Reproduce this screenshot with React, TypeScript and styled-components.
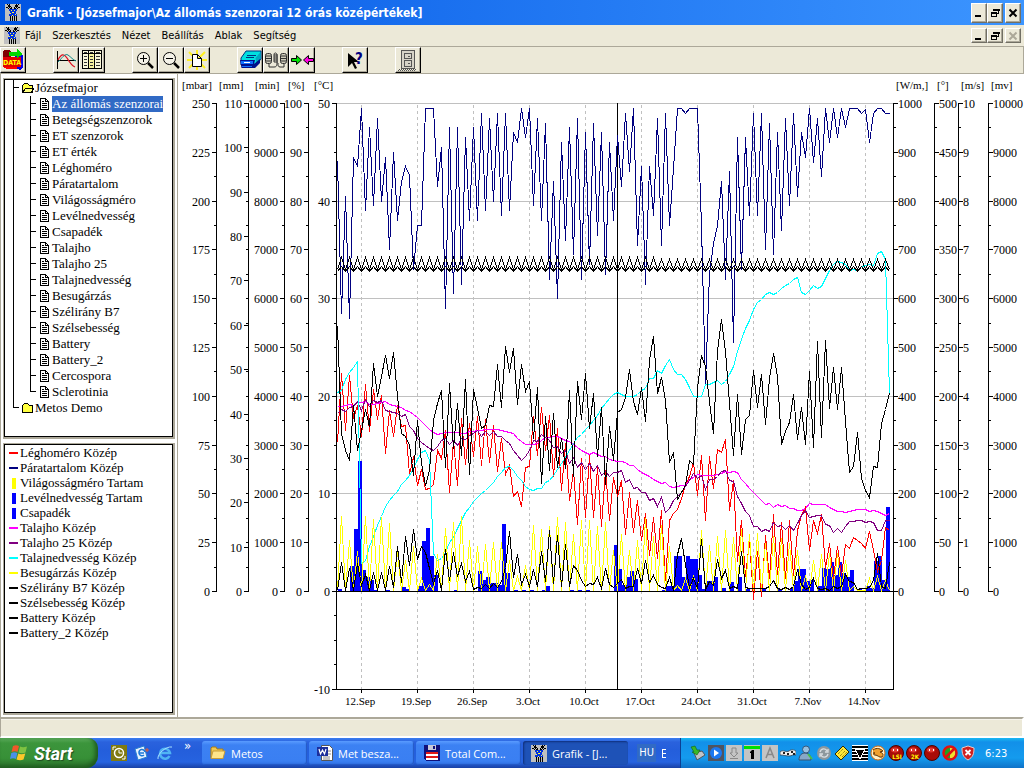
import React from 'react';
import styled, { createGlobalStyle, css } from 'styled-components';

const UI = '"DejaVu Sans Condensed", "DejaVu Sans", "Liberation Sans", sans-serif';
const HUMANIST = '"Open Sans", "Noto Sans", sans-serif';
const SERIF = '"Liberation Serif", serif';

const GlobalStyle = createGlobalStyle`
  *, *::before, *::after { box-sizing: border-box; }
  html, body, #root { margin: 0; height: 100%; }
  body { background: #ece9d8; font: 11px ${UI}; color: #000; overflow: hidden; }
  button { font: inherit; color: inherit; margin: 0; padding: 0; border: 0; background: none; }
  ul { list-style: none; margin: 0; padding: 0; }
  svg { display: block; flex: none; }
`;

/* ---------- window frame ---------- */

const Screen = styled.div`
  display: flex;
  flex-direction: column;
  height: 100vh;
`;

const TitleBar = styled.header`
  display: flex;
  align-items: center;
  height: 25px;
  padding: 0 3px 0 5px;
  gap: 6px;
  background: linear-gradient(90deg, #0054e3, #3c95ff);
`;

const Title = styled.h1`
  flex: 1;
  margin: 0;
  color: #fff;
  font: bold 12px ${UI};
  white-space: nowrap;
`;

const WindowControls = styled.div`
  display: flex;
  margin-left: auto;
`;

const WindowButton = styled.button<{ $small?: boolean; $apart?: boolean }>`
  display: grid;
  place-items: center;
  width: 16px;
  height: ${p => (p.$small ? 15 : 20)}px;
  margin-left: ${p => (p.$apart ? 2 : 0)}px;
  background: #ece9d8;
  border: 1px solid;
  border-color: #fff #716f64 #716f64 #fff;
  box-shadow: inset -1px -1px #aca899;
`;

const MenuBar = styled.nav`
  display: flex;
  align-items: center;
  height: 21px;
  padding: 0 3px 0 4px;
`;

const MenuItems = styled.div`
  display: flex;
  gap: 11px;
  margin-left: 5px;
`;

const MenuItem = styled.button`
  line-height: 16px;
  white-space: nowrap;
`;

const ToolBar = styled.div`
  display: flex;
  gap: 27px;
  height: 28px;
  border-top: 1px solid #aca899;
  border-bottom: 1px solid #aca899;
  border-right: 1px solid #aca899;
`;

const ToolGroup = styled.div`
  display: flex;
`;

const ToolButton = styled.button`
  display: grid;
  place-items: center;
  width: 26px;
  height: 26px;
  background: #ece9d8;
  border: 1px solid;
  border-color: #fff #000 #000 #fff;
  box-shadow: inset -1px -1px #aca899;
`;

const Main = styled.main`
  display: flex;
  flex: 1;
  min-height: 0;
  background: #fff;
`;

const StatusBar = styled.footer`
  height: 21px;
  border: solid;
  border-width: 2px 2px 2px 1px;
  border-color: #aca899 #fff #fff #aca899;
  box-shadow: inset 0 1px #f6f4ec;
  background: #ece9d8;
`;

/* ---------- side panels ---------- */

const Sidebar = styled.aside`
  display: flex;
  flex-direction: column;
  gap: 4px;
  width: 178px;
  padding: 4px 2px 2px 3px;
  border-right: 1px solid #aca899;
  box-shadow: inset 1px 0 #aca899;
  font: 13px/16px ${SERIF};
`;

const Panel = styled.section<{ $grow: number }>`
  flex: ${p => p.$grow} 1 0;
  min-height: 0;
  border: solid #aca899;
  border-width: 1px 2px 2px 1px;
  display: flex;
`;

const PanelBody = styled.div`
  flex: 1;
  border: 1px solid #000;
  overflow: hidden;
`;

const TreeRow = styled.li<{ $depth: number }>`
  display: flex;
  align-items: center;
  height: 16px;
  padding-left: 8px;
  gap: ${p => (p.$depth === 0 ? 3 : 4)}px;
`;

const Guides = styled.span`
  display: flex;
  height: 16px;
`;

const Guide = styled.span<{ $wide?: boolean }>`
  width: ${p => (p.$wide ? 17 : 5)}px;
  border-left: 1px solid #000;
`;

const Branch = styled.span<{ $last?: boolean }>`
  display: grid;
  grid-template-rows: 8px 8px;
  width: 6px;
  &::before { content: ''; border-left: 1px solid #000; border-bottom: 1px solid #000; }
  &::after { content: ''; border-left: ${p => (p.$last ? 0 : 1)}px solid #000; }
`;

const TreeButton = styled.button<{ $selected?: boolean }>`
  height: 16px;
  line-height: 16px;
  margin-left: -2px;
  white-space: nowrap;
  ${p => p.$selected && css`background: #316ac5; color: #fff;`}
`;

const LegendList = styled.ul`
  padding: 1px 0 0 4px;
`;

const LegendRow = styled.li`
  display: flex;
  align-items: center;
  gap: 2px;
  height: 15px;
  white-space: nowrap;
`;

const Swatch = styled.span<{ $color: string; $bar?: boolean }>`
  display: grid;
  place-items: center;
  width: 9px;
  &::before {
    content: '';
    width: ${p => (p.$bar ? 4 : 9)}px;
    height: ${p => (p.$bar ? 11 : 2)}px;
    background: ${p => p.$color};
  }
`;

/* ---------- task bar ---------- */

const TaskBar = styled.footer`
  display: flex;
  height: 30px;
  background: linear-gradient(#3a7df0 0, #2a62dd 4px, #245edb 12px, #2663e0 24px, #1941a5 30px);
  color: #fff;
`;

const StartButton = styled.button`
  display: flex;
  align-items: center;
  gap: 5px;
  width: 98px;
  padding-left: 10px;
  border-radius: 0 10px 12px 0;
  background: linear-gradient(#5dac5d 0, #3c953c 5px, #379037 20px, #2a6f2a 30px);
  box-shadow: inset -3px -2px 4px #1e5a1e;
  font: italic bold 18px Roboto, "Liberation Sans", sans-serif;
  text-shadow: 1px 1px 1px #1f4a1f;
`;

const QuickLaunch = styled.div`
  display: flex;
  align-items: center;
  gap: 7px;
  width: 104px;
  padding-left: 13px;
`;

const More = styled.button`
  align-self: flex-start;
  margin-left: 4px;
  font-size: 13px;
`;

const Tasks = styled.div`
  display: flex;
  align-items: center;
  gap: 2px;
`;

const TaskButton = styled.button<{ $active?: boolean }>`
  display: flex;
  align-items: center;
  gap: 5px;
  width: 105px;
  height: 24px;
  padding: 0 8px;
  border-radius: 3px;
  font-family: ${HUMANIST};
  white-space: nowrap;
  background: ${p => (p.$active ? '#1e52b7' : 'linear-gradient(#5a9bff 0, #3c81f3 4px, #3a7ff2 20px, #2f6fe0 24px)')};
  box-shadow: ${p => (p.$active ? 'inset 1px 1px 2px #0f2f7a' : 'inset -1px -1px 1px #2458c4')};
`;

const Language = styled.div`
  display: flex;
  align-items: center;
  gap: 6px;
  margin-left: auto;
  padding-right: 14px;
`;

const LanguageCode = styled.button`
  padding: 0 2px;
  line-height: 18px;
  background: #316ac5;
`;

const Tray = styled.div`
  display: flex;
  align-items: center;
  gap: 2px;
  width: 344px;
  padding-left: 9px;
  border-left: 1px solid #0c3f93;
  background: linear-gradient(#19b9f3 0, #1290e9 4px, #149bee 20px, #0f72c8 30px);
`;

const Clock = styled.time`
  margin-left: 7px;
`;

/* ---------- icons ---------- */

const Station = () => (
  <svg width="16" height="17" viewBox="0 0 16 17" shapeRendering="crispEdges">
    <rect width="16" height="17" fill="#c0c0c0" />
    <path d="M2 0l4 5M14 0l-4 5M1 3l5 3M15 3l-5 3M5 11v6M7 11v6M9 11v6M11 11v6M4 0l3 5M12 0l-3 5" stroke="#000" fill="none" />
    <path d="M4 5h8v2h-1v3h1v2H4v-2h1V7H4z" fill="#0030e0" />
    <path d="M6 6h1v1H6zM9 6h1v1H9zM7 8h2v1H7zM5 9h1v1H5zM10 10h1v1h-1zM7 11h1v1H7z" fill="#ffff40" />
  </svg>
);

const Minimise = () => (
  <svg width="10" height="10"><rect x="1" y="7" width="6" height="2" fill="#000" /></svg>
);
const Restore = () => (
  <svg width="10" height="10" shapeRendering="crispEdges" fill="none" stroke="#000">
    <path d="M3.500 3V1.500h5v4H7M3 1h6v1H3M1.500 4.500h5v4h-5zM1 5h6" />
  </svg>
);
const Close = ({ color = '#000' }: { color?: string }) => (
  <svg width="10" height="10"><path d="M1.500 1.500l7 7M8.500 1.500l-7 7" stroke={color} strokeWidth="2" /></svg>
);

const DataIcon = () => (
  <svg width="22" height="22" viewBox="0 0 22 22" shapeRendering="crispEdges">
    <path d="M13 6h8v13l-3 2-5-3z" fill="#0000e8" />
    <rect x="1" y="8" width="18" height="10" fill="#e00000" />
    <path d="M1 18h14v2H5z" fill="#f00" />
    <path d="M2 1h5l2 2v5H1V3z" fill="#800000" />
    <path d="M7 3h8V0l6 5-6 4V7H7z" fill="#00d800" />
    <text x="10" y="16" textAnchor="middle" fill="#ff0" fontFamily={UI} fontWeight="bold" fontSize="7">DATA</text>
  </svg>
);
const CurveIcon = () => (
  <svg width="22" height="20" viewBox="0 0 22 20" fill="none">
    <path d="M2.500 1v18M2 10.500h19" stroke="#000" shapeRendering="crispEdges" />
    <path d="M3 10c3-6 6-7 9-2s5 8 8 9" stroke="#e01020" strokeWidth="1.300" />
    <path d="M3 12c4-4 7-9 10-7s5 5 8 6" stroke="#108888" />
  </svg>
);
const TableIcon = () => (
  <svg width="20" height="20" viewBox="0 0 20 20" shapeRendering="crispEdges">
    <path d="M.5.500h19v18H.5z" fill="#f8f6d8" stroke="#000" />
    <path d="M.5 3.500h19M6.500 1v18M12.500 1v18" stroke="#000" />
    <path d="M7 4h5v14H7z" fill="#f8f4a0" />
    <path d="M2 6.500h3M2 9.500h3M2 12.500h3M2 15.500h3M8 6.500h3M8 9.500h3M8 12.500h3M8 15.500h3M14 6.500h4M14 9.500h4M14 12.500h4M14 15.500h4M2 2h3M8 2h3M14 2h4" stroke="#333" />
  </svg>
);
const Magnifier = ({ plus }: { plus?: boolean }) => (
  <svg width="20" height="20" viewBox="0 0 20 20" fill="none" stroke="#000">
    <circle cx="8.500" cy="8.500" r="6" fill="#f4f2e8" />
    <path d={plus ? 'M5 8.500h7M8.500 5v7' : 'M5 8.500h7'} shapeRendering="crispEdges" />
    <path d="M13 13l5 5" strokeWidth="2.500" />
  </svg>
);
const NewPage = () => (
  <svg width="20" height="20" viewBox="0 0 20 20">
    <path d="M2 2l16 16M18 2L2 18M10 0v20M0 10h20" stroke="#ffef20" strokeWidth="2" />
    <path d="M5.500 4.500h5l4 4v8h-9zM10.500 4.500v4h4" fill="#fff" stroke="#000" />
  </svg>
);
const DrawerIcon = () => (
  <svg width="23" height="20" viewBox="0 0 23 20">
    <path d="M7 1h15v8l-5 6H2V8z" fill="#00e0e0" stroke="#003080" />
    <path d="M16.500 8L21.500 2v7l-4 5z" fill="#00a8c0" />
    <path d="M8 5.500h9M7 7.500h8" stroke="#003080" />
    <path d="M1 10h15l-1 4 6-5v4l-5 5H2.500z" fill="#00108c" />
    <path d="M2 11h12v3H2zM3 16h10v1H3z" fill="#1070ff" />
    <path d="M5 12.500h6" stroke="#fff" />
  </svg>
);
const PlugIcon = () => (
  <svg width="24" height="20" viewBox="0 0 24 20" fill="none" stroke="#303030">
    <rect x="1.500" y="3.500" width="6" height="10" rx="2" fill="#d0cdbc" />
    <rect x="16.500" y="3.500" width="6" height="10" rx="2" fill="#d0cdbc" />
    <path d="M2 6h5M2 8.500h5M2 11h5M17 6h5M17 8.500h5M17 11h5M5 14v3h5c3 0 3-2 3-5V6c0-4-3-4-3-1v7M20 14v3h-4c-2 0-2-2-2-4" />
    <path d="M11 4v9M13 4v9" />
  </svg>
);
const ArrowsIcon = () => (
  <svg width="23" height="12" viewBox="0 0 23 12" stroke="#000">
    <path d="M.5 4.500h5v-3l5 4.500-5 4.500v-3h-5z" fill="#00e000" />
    <path d="M22.500 4.500h-5v-3L12.500 6l5 4.500v-3h5z" fill="#ff00e0" />
  </svg>
);
const HelpIcon = () => (
  <svg width="20" height="20" viewBox="0 0 20 20">
    <path d="M3 3v14l4-4 3 6 2-1-3-6h5z" fill="#000" />
    <text x="10" y="14" fill="#000080" fontFamily={UI} fontWeight="bold" fontSize="15">?</text>
  </svg>
);
const CabinetIcon = () => (
  <svg width="20" height="21" viewBox="0 0 20 21" shapeRendering="crispEdges" fill="#d6d3c8" stroke="#555">
    <path d="M3.500.5h13v18h-13zM6.500 3.500h7v5h-7zM6.500 10.500h7v6h-7zM10 6.500h2M10 13.500h2" />
    <path d="M1 19.500h18M0 20.500h18" strokeDasharray="1 1" />
  </svg>
);

const DocIcon = () => (
  <svg width="10" height="12" viewBox="0 0 10 12" shapeRendering="crispEdges">
    <path d="M.5.5h5l3 3v8h-8zM5.500.5v3h3" fill="#fff" stroke="#000" />
    <path d="M2 3.500h2M2 5.500h5M2 7.500h5M2 9.500h5" stroke="#000" />
  </svg>
);
const FolderIcon = ({ open }: { open?: boolean }) => (
  <svg width="12" height="11" viewBox="0 0 12 11" shapeRendering="crispEdges">
    <path d="M.5 9.500v-7l2-2h3l2 2h3v7z" fill="#ffff40" stroke="#000" />
    {open && <path d="M.5 9.500l3-4h8l-2 4z" fill="#ffff80" stroke="#000" />}
  </svg>
);

const Flag = () => (
  <svg width="19" height="18" viewBox="0 0 19 18">
    <path d="M3 2c2-1 4-1 6 0L7.500 8C6 7 4 7 1.500 8z" fill="#f0582a" />
    <path d="M10 2.500c2 1 4 1 7 0L15.500 8.500c-2 1-5 1-7 0z" fill="#7fc242" />
    <path d="M1.300 9c2-1 4-1 6 0L6 15c-2-1-4-1-6 0z" fill="#4a90e8" />
    <path d="M8.300 9.500c2 1 4 1 7 0L13.500 15.500c-2 1-5 1-7 0z" fill="#fdc82a" />
  </svg>
);
const OutlookIcon = () => (
  <svg width="16" height="16" viewBox="0 0 16 16">
    <rect width="16" height="16" fill="#807a10" />
    <circle cx="8" cy="8" r="4.500" fill="none" stroke="#fff" strokeWidth="1.500" />
    <path d="M8 5v3h3M2 2h3M2 2v3M14 14h-3M14 14v-3" stroke="#fff" fill="none" />
  </svg>
);
const MailIcon = () => (
  <svg width="16" height="16" viewBox="0 0 16 16">
    <path d="M1 4l9-3 3 11-9 3z" fill="#e8f2ff" stroke="#2a80d0" />
    <path d="M10 8H5a3 3 0 0 1 6-1M5 8a3 3 0 0 0 5 2" stroke="#1a78d8" strokeWidth="1.500" fill="none" />
    <path d="M11 5h4M13 3v4" stroke="#e86030" />
  </svg>
);
const ExplorerIcon = () => (
  <svg width="16" height="16" viewBox="0 0 16 16" fill="none">
    <path d="M12.500 11a5 5 0 1 1 .5-3H4" stroke="#4fb4f4" strokeWidth="2.500" />
    <path d="M1 14C0 9 9 1 15 2" stroke="#a8e0ff" />
  </svg>
);
const FolderTask = () => (
  <svg width="16" height="14" viewBox="0 0 16 14">
    <path d="M1 12V2l1-1h4l1 2h6v9z" fill="#f0c850" stroke="#a87c18" />
    <path d="M1 12.500L3 5h12l-2 7.500z" fill="#ffe58a" stroke="#c89c38" />
  </svg>
);
const WordTask = () => (
  <svg width="16" height="16" viewBox="0 0 16 16">
    <path d="M4.500.5h8l3 3v12h-11z" fill="#fff" stroke="#555" />
    <path d="M6 12h7M6 14h7M11 6h3M11 9h3" stroke="#888" />
    <rect x="0" y="2" width="11" height="9" fill="#1c2f9c" />
    <path d="M2 4l1.500 5L5.500 5l2 4L9 4" stroke="#fff" fill="none" strokeWidth="1.200" />
  </svg>
);
const FloppyTask = () => (
  <svg width="16" height="16" viewBox="0 0 16 16" shapeRendering="crispEdges">
    <path d="M0 0h16v16H2l-2-2z" fill="#10107a" />
    <path d="M4 0h8v5H4z" fill="#c8c8d8" /><path d="M9 1h2v3H9z" fill="#10107a" />
    <path d="M2 8h12v7H2z" fill="#fff" /><path d="M2 7h12v2H2zM2 11h12v2H2z" fill="#e01818" />
  </svg>
);

const Square = ({ children, fill = '#c4c4c4' }: { children?: React.ReactNode; fill?: string }) => (
  <svg width="16" height="16" viewBox="0 0 16 16"><rect width="16" height="16" fill={fill} />{children}</svg>
);
const RedBall = ({ label }: { label?: string }) => (
  <svg width="16" height="16" viewBox="0 0 16 16">
    <circle cx="8" cy="8" r="7.500" fill="#a80c08" stroke="#4c0400" />
    <ellipse cx="7" cy="5" rx="4" ry="2.500" fill="#e03830" />
    <path d="M5 4h1v2H5zM9 4h1v2H9z" fill="#fff" />
    {label && <text x="9" y="14" textAnchor="middle" fill="#ff0" fontFamily={UI} fontSize="6" fontWeight="bold">{label}</text>}
  </svg>
);
const TrayIcons = () => (
  <>
    <svg width="16" height="16" viewBox="0 0 16 16">
      <path d="M4 8l8-2 3 4-8 5z" fill="#c0c4c8" stroke="#505860" />
      <path d="M1 2l4-1 2 4h3l-3 5-5-3h2z" fill="#38b828" stroke="#106010" strokeWidth=".6" />
    </svg>
    <Square fill="#505460"><circle cx="8" cy="8" r="6" fill="#1c78f0" /><path d="M6 4.500v7l5-3.500z" fill="#fff" /></Square>
    <Square><path d="M6 3h4v5h2l-4 4-4-4h2zM4 13.500h8" fill="none" stroke="#888" /></Square>
    <Square><rect width="16" height="3" y="1" fill="#00e000" /><path d="M6 7l2-2h2v9H7V8H6z" fill="#000" /></Square>
    <Square><path d="M4 13L8 3l4 10M5.500 9.500h5" fill="none" stroke="#888" strokeWidth="1.500" /></Square>
    <svg width="16" height="16" viewBox="0 0 16 16">
      <path d="M0 7c3-3 6 1 9-1s5-1 7 0v4c-3-1-4 1-7 1s-5-1-9-1z" fill="#f0f0f0" stroke="#203040" strokeWidth=".7" />
      <path d="M3 7h2v2H3zM7 8h2v2H7zM11 6h2v2h-2zM13 8h2v2h-2z" fill="#202020" />
    </svg>
    <svg width="16" height="16" viewBox="0 0 16 16">
      <path d="M1 15c0-5 3-7 6-7s6 2 6 7z" fill="#88a8c8" stroke="#38506c" />
      <circle cx="8" cy="4.500" r="3.500" fill="#98c0e0" stroke="#38587c" />
      <path d="M10 9l4 5" stroke="#48c048" strokeWidth="2" />
    </svg>
    <svg width="16" height="16" viewBox="0 0 16 16">
      <circle cx="8" cy="8" r="7" fill="#8e989e" />
      <path d="M4 7c1-4 6-4 7-1M12 4v3H9M12 9c-1 4-6 4-7 1M4 12V9h3" stroke="#d8dce0" strokeWidth="1.300" fill="none" />
    </svg>
    <svg width="16" height="16" viewBox="0 0 16 16">
      <path d="M1 9l8-8 6 6-8 8z" fill="#ffe838" stroke="#302800" />
      <path d="M4 9l5-5M6 11l5-5M8 12l5-5" stroke="#706000" strokeDasharray="1 1" />
    </svg>
    <svg width="16" height="16" viewBox="0 0 16 16" shapeRendering="crispEdges">
      <rect width="16" height="16" fill="#fff" />
      <path d="M0 1.500h16M0 4.500h16M0 7.500h16M0 10.500h16M0 13.500h16" stroke="#000" strokeWidth="2" />
      <path d="M3 4h10l-5 10z" fill="#000" stroke="#fff" />
    </svg>
    <svg width="16" height="16" viewBox="0 0 16 16">
      <circle cx="8" cy="8" r="7" fill="#fff0c8" stroke="#d86808" />
      <path d="M3 5c4-3 8-1 10 1l-3 1c3 1 4 3 2 5-3 1-4-2-7-2-2 0-2-2 0-2L3 8" fill="#f0a030" stroke="#603000" />
    </svg>
    <RedBall label="LSI" />
    <RedBall label="2K" />
    <RedBall />
    <svg width="16" height="16" viewBox="0 0 16 16">
      <path d="M2 3h6v10H2z" fill="#20a020" /><path d="M8 3h5v10H8z" fill="#f0e030" />
      <circle cx="8" cy="8" r="6.500" fill="none" stroke="#e01010" strokeWidth="2.500" />
      <path d="M13 3L3 13" stroke="#e01010" strokeWidth="2.500" />
    </svg>
    <svg width="16" height="16" viewBox="0 0 16 16">
      <path d="M8 1l6 2c0 6-1 9-6 12C3 12 2 9 2 3z" fill="#d02020" stroke="#e8c8c8" />
      <path d="M5.500 5l5 5M10.500 5l-5 5" stroke="#fff" strokeWidth="1.800" />
    </svg>
  </>
);

/* ---------- chart ---------- */

// Readings come every 12 hours (4px); heights are in thirds of a pixel below a series' own top.
const STEP = 4;
const X0 = 337;
const UPPER = 90;
const LOWER = 330;
const ZERO = 591;

const humidity = [215,670,320,686,202,229,55,360,112,347,85,334,202,479,187,391,275,229,256,538,406,406,55,55,55,290,172,656,112,611,112,584,142,392,112,392,70,361,85,334,70,377,70,361,127,157,55,142,55,347,85,391,100,569,274,626,157,452,112,494,85,569,127,523,100,437,127,554,157,391,136,290,70,244,55,466,229,584,229,377,85,466,70,406,235,55,55,70,55,55,55,410,880,550,460,405,274,569,244,758,142,538,142,377,70,377,70,479,100,494,127,421,85,347,70,320,127,202,55,218,85,259,55,157,55,142,55,112,55,55,55,70,57,157,70,55,55,70,70];
const moisture = [188,180,148,126,112,94,700,690,650,618,585,558,530,512,496,484,463,450,435,415,388,366,360,390,670,690,685,668,637,622,595,570,548,532,515,503,490,480,468,458,440,428,412,408,420,438,452,470,479,482,476,475,458,450,435,418,400,382,360,340,322,312,298,285,270,255,235,220,204,194,188,192,199,200,200,193,182,174,145,145,122,131,105,88,117,133,134,148,172,198,200,198,163,163,157,152,162,155,133,108,65,28,-5,-28,-62,-82,-93,-107,-113,-107,-114,-125,-134,-141,-152,-158,-114,-107,-118,-133,-125,-132,-155,-180,-197,-205,-202,-198,-180,-182,-180,-192,-195,-197,-195,-230,-236,-212,190];
const airTemp = [338,130,302,135,265,225,320,163,305,178,268,196,370,242,318,226,290,286,433,378,467,418,478,475,463,362,385,302,486,330,467,265,402,280,378,260,405,268,396,285,423,325,433,405,500,484,529,413,410,260,375,232,362,257,440,295,480,340,511,420,583,385,563,376,562,412,590,420,572,443,500,451,614,488,607,510,631,550,677,562,684,540,750,572,550,537,505,466,438,398,495,376,571,378,475,358,367,328,540,450,695,572,738,630,808,665,800,615,745,552,733,577,745,570,735,600,555,532,660,572,610,553,715,640,745,650,735,643,655,622,630,640,656,603,660,725,690,592,600];
const soil = [228,229,225,222,225,217,216,214,222,222,220,216,214,224,225,228,233,240,243,252,261,274,286,297,307,312,309,307,307,307,308,311,310,305,304,301,300,299,298,299,298,300,303,306,309,325,334,342,343,343,340,331,323,321,320,320,325,332,335,343,352,362,368,372,367,374,378,380,388,392,394,394,398,406,406,417,428,433,438,448,455,460,457,470,471,470,467,466,448,443,434,437,435,437,436,433,430,425,426,425,428,449,460,475,488,500,510,522,521,532,523,530,527,534,534,540,541,535,520,523,523,523,523,532,537,543,545,548,544,542,538,538,538,543,540,545,551,555,550];
const soil25 = [250,238,245,232,228,215,242,208,230,212,218,210,242,245,247,250,258,252,290,300,325,337,347,355,362,350,330,325,343,332,345,325,328,317,311,302,318,304,317,304,318,320,330,340,360,377,390,380,360,330,335,313,322,330,352,348,370,362,400,382,412,396,418,400,425,405,435,425,440,428,426,420,457,447,475,472,486,488,512,505,530,503,547,535,510,500,487,470,450,430,445,435,478,448,448,440,425,420,450,455,500,520,545,557,588,590,605,597,603,577,590,585,597,585,600,580,555,540,563,560,555,555,582,587,607,595,607,590,575,575,570,570,576,575,578,602,600,572,570];
const windDirection = [-10,310,360,390,225,362,300,238,290,100,198,140,76,145,67,200,310,320,345,437,270,400,465,420,272,220,181,413,160,355,220,377,148,434,178,235,295,285,227,228,103,231,50,127,55,223,103,185,155,325,172,461,260,420,250,412,325,415,181,440,154,268,130,296,190,378,232,463,290,392,248,237,203,118,215,253,173,274,90,18,190,142,210,397,367,508,487,465,390,402,175,76,110,215,310,60,-33,65,220,376,193,373,268,256,121,232,133,283,145,70,140,344,305,278,193,328,232,343,124,352,33,323,31,235,112,238,112,275,428,408,307,445,480,502,408,412,280,238,190];
const windSpeed = [780,697,780,715,780,700,767,733,780,727,780,727,780,710,772,648,758,620,705,598,688,650,668,715,760,722,780,658,752,668,738,700,755,725,778,772,776,762,775,760,772,755,712,603,742,673,762,733,770,718,770,664,755,600,760,615,770,643,768,706,722,750,768,760,762,742,775,716,762,772,760,748,775,768,768,716,760,690,758,736,762,772,776,742,780,672,625,705,772,745,775,628,778,755,765,688,745,722,776,770,776,665,772,776,776,776,776,776,768,752,776,778,772,778,770,720,762,778,772,745,776,778,775,780,770,776,770,733,755,758,778,775,775,772,752,670,770,775,698];
const radiationPeaks = [558,632,663,560,567,562,580,668,690,650,745,762,672,595,577,558,630,650,643,636,636,690,738,705,585,597,590,562,577,612,570,572,590,578,660,612,660,630,565,620,585,650,765,745,738,602,645,618,602,622,597,612,610,640,620,625,640,660,740,690,672,670,670,690,770,780,745,740,750];
const radiation = [780, ...radiationPeaks.flatMap(v => [v, 780])];
const battery = humidity.map((_, i) => (i % 2 ? (i < 80 ? 503 : 509) : 537));
const battery2 = humidity.map((_, i) => (i % 2 ? 528 : 543));

const wetness: [number, number][] = [
  [0,777],[3,708],[4,597],[5,395],[6,722],[7,742],[8,750],[9,780],[12,780],[16,771],[17,777],[20,768],[21,633],[22,594],[23,678],[24,735],[29,780],
  [35,723],[36,750],[37,741],[38,759],[39,759],[40,765],[41,582],[42,729],[44,780],[46,780],[48,780],[51,780],[52,770],[58,780],[60,780],[62,780],
  [69,645],[70,717],[71,765],[72,743],[73,723],[74,747],[81,780],[82,768],[83,768],[84,678],[85,678],[86,743],[87,678],[88,687],[89,687],[90,735],
  [91,777],[92,755],[93,753],[94,743],[96,774],[98,758],[100,743],[102,777],[106,777],[110,777],[113,774],[114,753],[115,717],[116,717],[117,755],
  [118,750],[120,768],[121,714],[122,717],[123,697],[124,735],[125,697],[126,730],[127,742],[128,720],[130,778],[132,768],[133,774],[134,693],
  [135,678],[136,750],[137,531],
];

const points = (data: number[], top: number) =>
  data.map((v, i) => `${X0 + i * STEP + 0.5},${Math.floor(top + v / 3) + 0.5}`).join(' ');

const lines: { data: number[]; top: number; color: string }[] = [
  { data: airTemp, top: LOWER, color: '#ff0000' },
  { data: humidity, top: UPPER, color: '#000080' },
  { data: soil, top: LOWER, color: '#ff00ff' },
  { data: soil25, top: LOWER, color: '#800080' },
  { data: moisture, top: LOWER, color: '#00ffff' },
  { data: radiation, top: LOWER, color: '#ffff00' },
  { data: windDirection, top: LOWER, color: '#000' },
  { data: windSpeed, top: LOWER, color: '#000' },
  { data: battery, top: UPPER, color: '#000' },
  { data: battery2, top: UPPER, color: '#000' },
];

type Scale = { unit: string; unitX: number; x: number; max: number; step: number; right?: boolean; min?: number };
const scales: Scale[] = [
  { unit: '[mbar]', unitX: 182, x: 216, max: 250, step: 25 },
  { unit: '[mm]', unitX: 219, x: 248, max: 110, step: 10 },
  { unit: '[min]', unitX: 255, x: 284, max: 10000, step: 1000 },
  { unit: '[%]', unitX: 288, x: 308, max: 100, step: 10 },
  { unit: '[°C]', unitX: 314, x: 336, max: 50, step: 10, min: -10 },
  { unit: '[W/m,]', unitX: 896, x: 893, max: 1000, step: 100, right: true },
  { unit: '[°]', unitX: 937, x: 934, max: 500, step: 50, right: true },
  { unit: '[m/s]', unitX: 961, x: 958, max: 10, step: 1, right: true },
  { unit: '[mv]', unitX: 991, x: 988, max: 10000, step: 1000, right: true },
];
const dates = ['12.Sep', '19.Sep', '26.Sep', '3.Oct', '10.Oct', '17.Oct', '24.Oct', '31.Oct', '7.Nov', '14.Nov'];

const ChartSvg = styled.svg`
  flex: 1;
  min-width: 0;
  height: 100%;
  font: 12px ${SERIF};
`;

const Caption = styled.text`
  font-size: 11px;
`;

const TOP = 103;
const BOTTOM = 689;

const Axis = ({ unit, unitX, x, max, step, right, min = 0 }: Scale) => {
  const dir = right ? 1 : -1;
  const end = min < 0 ? BOTTOM : ZERO;
  const yOf = (v: number) => Math.round(ZERO - (v / max) * (ZERO - TOP)) + 0.5;
  const values: number[] = [];
  for (let v = min; v <= max; v += step) values.push(v);
  const minor: number[] = [];
  for (let y = TOP; y <= end; y += 24.4) minor.push(Math.round(y) + 0.5);
  return (
    <g>
      <Caption x={unitX} y={89}>{unit}</Caption>
      <g stroke="#000" shapeRendering="crispEdges">
        <path d={`M${x + 0.5} ${TOP}V${x === 893 ? BOTTOM : end + 1}`} />
        {minor.map(y => <path key={y} d={`M${x + 0.5} ${y}h${2.5 * dir}`} />)}
        {values.map(v => <path key={v} d={`M${x + 0.5} ${yOf(v)}h${4.5 * dir}`} />)}
      </g>
      {values.map(v => (
        <text key={v} x={x + (right ? 5 : -6)} y={yOf(v) + 4} textAnchor={right ? 'start' : 'end'}>{v}</text>
      ))}
    </g>
  );
};

const Chart = () => (
  <ChartSvg viewBox="178 74 846 643" preserveAspectRatio="xMinYMin meet" role="img" aria-label="12 órás középértékek">
    <g shapeRendering="crispEdges" fill="none" stroke="#c0c0c0">
      {[103, 201, 298, 396, 493].map(y => <path key={y} d={`M337 ${y}.5H893`} />)}
      {dates.map((d, i) => <path key={d} d={`M${361.5 + i * 56} ${TOP + 2}V${BOTTOM}`} strokeDasharray="3 3" />)}
    </g>
    <g shapeRendering="crispEdges" fill="#0000ff">
      {wetness.map(([k, v]) => {
        const y = Math.floor(LOWER + v / 3);
        return <rect key={k} x={338 + k * STEP} y={y} width={STEP} height={ZERO - y} />;
      })}
    </g>
    <g shapeRendering="crispEdges" fill="none" stroke="#000">
      <path d="M337 591.5H893M337 689.500H894M617.500 103V689" />
      {dates.map((d, i) => <path key={d} d={`M${361.5 + i * 56} 690v3`} />)}
      {lines.map((l, i) => <polyline key={i} points={points(l.data, l.top)} stroke={l.color} />)}
    </g>
    {scales.map(s => <Axis key={s.unit} {...s} />)}
    {dates.map((d, i) => <Caption key={d} x={360 + i * 56} y={705} textAnchor="middle">{d}</Caption>)}
  </ChartSvg>
);

/* ---------- page ---------- */

const menus = ['Fájl', 'Szerkesztés', 'Nézet', 'Beállítás', 'Ablak', 'Segítség'];

const tools: [string, React.ReactNode][][] = [
  [['Adatok', <DataIcon />]],
  [['Grafikon', <CurveIcon />], ['Táblázat', <TableIcon />]],
  [['Nagyítás', <Magnifier plus />], ['Kicsinyítés', <Magnifier />], ['Új', <NewPage />]],
  [['Letöltés', <DrawerIcon />], ['Kapcsolat', <PlugIcon />], ['Átvitel', <ArrowsIcon />]],
  [['Súgó', <HelpIcon />]],
  [['Kilépés', <CabinetIcon />]],
];

const sensors = ['Az állomás szenzorai', 'Betegségszenzorok', 'ET szenzorok', 'ET érték', 'Léghoméro', 'Páratartalom', 'Világosságméro', 'Levélnedvesség', 'Csapadék', 'Talajho', 'Talajho 25', 'Talajnedvesség', 'Besugárzás', 'Szélirány B7', 'Szélsebesség', 'Battery', 'Battery_2', 'Cercospora', 'Sclerotinia'];

const legend: [string, string, boolean?][] = [
  ['Léghoméro Közép', '#ff0000'],
  ['Páratartalom Közép', '#000080'],
  ['Világosságméro Tartam', '#ffff00', true],
  ['Levélnedvesség Tartam', '#0000ff', true],
  ['Csapadék', '#0000ff', true],
  ['Talajho Közép', '#ff00ff'],
  ['Talajho 25 Közép', '#800080'],
  ['Talajnedvesség Közép', '#00ffff'],
  ['Besugárzás Közép', '#ffff00'],
  ['Szélirány B7 Közép', '#000'],
  ['Szélsebesség Közép', '#000'],
  ['Battery Közép', '#000'],
  ['Battery_2 Közép', '#000'],
];

const Controls = ({ small }: { small?: boolean }) => (
  <WindowControls>
    <WindowButton $small={small} aria-label="Kis méret"><Minimise /></WindowButton>
    <WindowButton $small={small} aria-label="Előző méret"><Restore /></WindowButton>
    <WindowButton $small={small} $apart aria-label="Bezárás"><Close color={small ? '#aca899' : '#000'} /></WindowButton>
  </WindowControls>
);

export default function App() {
  return (
    <Screen>
      <GlobalStyle />
      <TitleBar>
        <Station />
        <Title>Grafik - [Józsefmajor\Az állomás szenzorai 12 órás középértékek]</Title>
        <Controls />
      </TitleBar>
      <MenuBar>
        <Station />
        <MenuItems>{menus.map(m => <MenuItem key={m}>{m}</MenuItem>)}</MenuItems>
        <Controls small />
      </MenuBar>
      <ToolBar>
        {tools.map((group, i) => (
          <ToolGroup key={i}>
            {group.map(([label, icon]) => <ToolButton key={label} aria-label={label}>{icon}</ToolButton>)}
          </ToolGroup>
        ))}
      </ToolBar>
      <Main>
        <Sidebar>
          <Panel $grow={361}>
            <PanelBody>
              <ul>
                <TreeRow $depth={0}>
                  <Guides><Branch /></Guides>
                  <FolderIcon open />
                  <TreeButton>Józsefmajor</TreeButton>
                </TreeRow>
                {sensors.map((s, i) => (
                  <TreeRow key={s} $depth={1}>
                    <Guides><Guide $wide /><Branch $last={i === sensors.length - 1} /></Guides>
                    <DocIcon />
                    <TreeButton $selected={i === 0}>{s}</TreeButton>
                  </TreeRow>
                ))}
                <TreeRow $depth={0}>
                  <Guides><Branch $last /></Guides>
                  <FolderIcon />
                  <TreeButton>Metos Demo</TreeButton>
                </TreeRow>
              </ul>
            </PanelBody>
          </Panel>
          <Panel $grow={272}>
            <PanelBody>
              <LegendList>
                {legend.map(([name, color, bar]) => (
                  <LegendRow key={name}><Swatch $color={color} $bar={bar} />{name}</LegendRow>
                ))}
              </LegendList>
            </PanelBody>
          </Panel>
        </Sidebar>
        <Chart />
      </Main>
      <StatusBar />
      <TaskBar>
        <StartButton><Flag />Start</StartButton>
        <QuickLaunch>
          <OutlookIcon /><MailIcon /><ExplorerIcon />
          <More aria-label="Továbbiak">»</More>
        </QuickLaunch>
        <Tasks>
          <TaskButton><FolderTask />Metos</TaskButton>
          <TaskButton><WordTask />Met besza...</TaskButton>
          <TaskButton><FloppyTask />Total Com...</TaskButton>
          <TaskButton $active><Station />Grafik - [J...</TaskButton>
        </Tasks>
        <Language>
          <LanguageCode>HU</LanguageCode>
          <svg width="4" height="10" shapeRendering="crispEdges"><path d="M.5 1v9M0 1.500h4M0 5.500h4M0 9.500h4" stroke="#fff" /></svg>
        </Language>
        <Tray>
          <TrayIcons />
          <Clock>6:23</Clock>
        </Tray>
      </TaskBar>
    </Screen>
  );
}
